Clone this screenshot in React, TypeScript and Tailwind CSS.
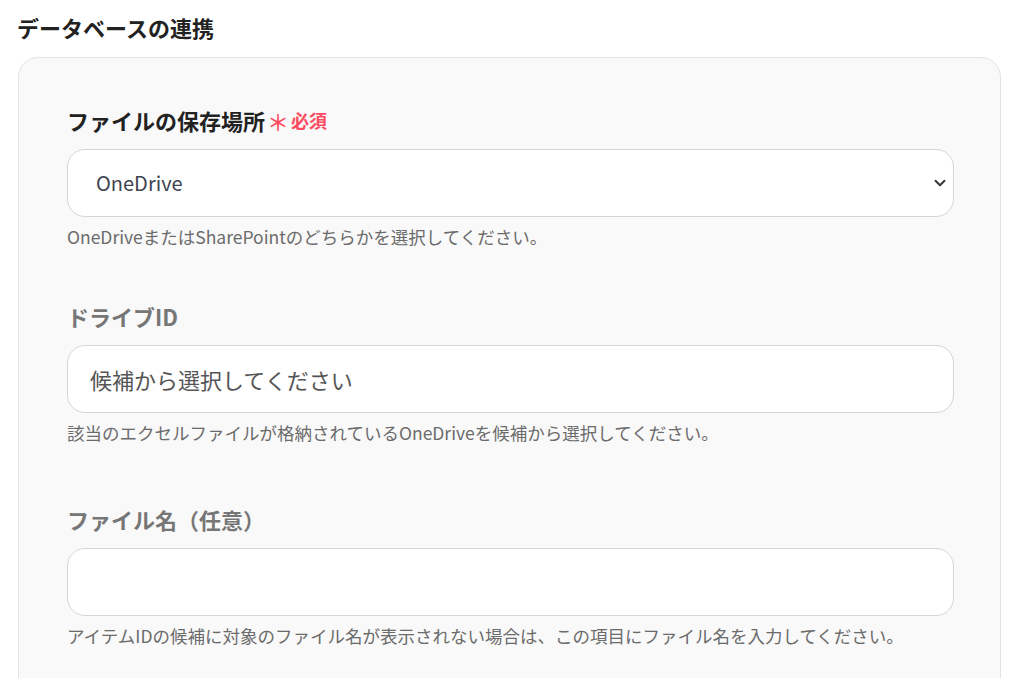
import { ChevronDown } from 'lucide-react';

const font = { fontFamily: '"Noto Sans CJK JP", "Noto Sans", sans-serif' };

const App = () => {
  return (
    <div className="min-h-screen bg-white pl-[17px] pr-[22px] pt-[13px]" style={font}>
      <h2 className="text-[22px] leading-7 font-bold text-[#222]">データベースの連携</h2>

      <div className="mt-4 ml-px rounded-[20px] border border-[#e2e2e6] bg-[#f9f9f9] pl-12 pr-[46px] pt-12 pb-16">
        {/* 保存場所 */}
        <div>
          <label className="flex items-center text-[22px] leading-7 font-bold text-[#222]">
            ファイルの保存場所
            <span className="ml-0.5 text-[22px] leading-7 font-medium text-[#fc4c61]">＊</span>
            <span className="ml-0.5 text-[18px] leading-7 text-[#fc4c61]">必須</span>
          </label>
          <div className="relative mt-[15px]">
            <select
              defaultValue="OneDrive"
              className="h-[68px] w-full appearance-none rounded-[18px] border border-[#d2d5dc] bg-white pl-[28px] pr-12 text-[20px] text-[#3f4451] outline-none"
            >
              <option>OneDrive</option>
              <option>SharePoint</option>
            </select>
            <ChevronDown className="pointer-events-none absolute right-[5px] top-1/2 h-[18px] w-[18px] -translate-y-1/2 text-[#333]" strokeWidth={2.5} />
          </div>
          <p className="mt-2 text-[17.5px] leading-6 text-[#6b6b6b]">
            OneDriveまたはSharePointのどちらかを選択してください。
          </p>
        </div>

        {/* ドライブID */}
        <div className="mt-[53px]">
          <label className="block text-[22px] leading-7 font-bold text-[#767676]">ドライブID</label>
          <input
            placeholder="候補から選択してください"
            className="mt-[15px] h-[68px] w-full rounded-[18px] border border-[#d2d5dc] bg-white pl-[22px] text-[22px] text-[#333] placeholder:text-[#555] outline-none"
          />
          <p className="mt-2 text-[17.5px] leading-6 text-[#6b6b6b]">
            該当のエクセルファイルが格納されているOneDriveを候補から選択してください。
          </p>
        </div>

        {/* ファイル名 */}
        <div className="mt-[60px]">
          <label className="block text-[22px] leading-7 font-bold text-[#767676]">ファイル名（任意）</label>
          <input className="mt-[15px] h-[68px] w-full rounded-[18px] border border-[#d2d5dc] bg-white pl-[22px] text-[22px] text-[#333] outline-none" />
          <p className="mt-2 text-[17.5px] leading-6 text-[#6b6b6b]">
            アイテムIDの候補に対象のファイル名が表示されない場合は、この項目にファイル名を入力してください。
          </p>
        </div>
      </div>
    </div>
  );
};

export default App;
